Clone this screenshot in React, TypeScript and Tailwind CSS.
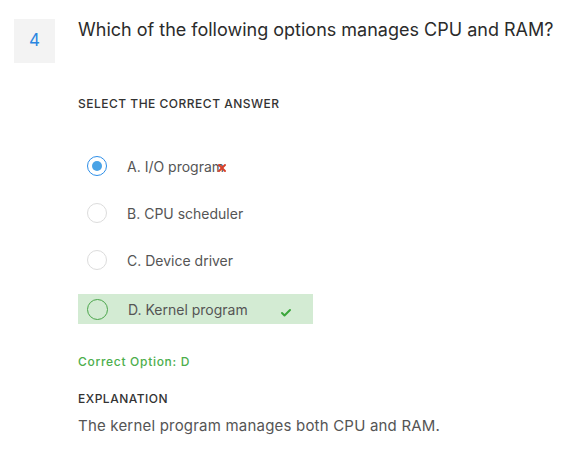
import { Check, X } from "lucide-react";

const options = [
  { key: "A", label: "I/O program", selected: true, wrong: true },
  { key: "B", label: "CPU scheduler" },
  { key: "C", label: "Device driver" },
  { key: "D", label: "Kernel program", correct: true },
];

function Radio({ selected, correct }: { selected?: boolean; correct?: boolean }) {
  if (selected) {
    return (
      <span className="flex h-[20px] w-[20px] items-center justify-center rounded-full border-[1.5px] border-[#2d8ee8]">
        <span className="h-[10px] w-[10px] rounded-full bg-[#4aa3e6]" />
      </span>
    );
  }
  if (correct) {
    return <span className="h-[21px] w-[21px] rounded-full border-[1.5px] border-[#4aa54a]" />;
  }
  return <span className="h-[20px] w-[20px] rounded-full border border-[#dcdcdc]" />;
}

export default function App() {
  return (
    <div className="min-h-[464px] w-[570px] bg-white font-['Inter',sans-serif]">
      <div className="flex pl-[14px] pt-[19px]">
        <div className="flex h-[44px] w-[41px] items-center justify-center bg-[#f3f3f3] text-[17px] text-[#2a86e0]">
          4
        </div>
        <div className="ml-[23px] flex-1">
          <h1 className="mt-[-1px] text-[18px] leading-[24px] text-[#2b2b2b]">
            Which of the following options manages CPU and RAM?
          </h1>
          <p className="mt-[54px] text-[12px] font-medium leading-[16px] tracking-[0.5px] text-[#333]">
            SELECT THE CORRECT ANSWER
          </p>

          <div className="mt-[39px] flex flex-col gap-[17px]">
            {options.map((o) => (
              <div
                key={o.key}
                className={`relative flex h-[30px] w-[235px] items-center pl-[9px] ${
                  o.correct ? "mt-[2px] bg-[#d3ebd3]" : ""
                }`}
              >
                <Radio selected={o.selected} correct={o.correct} />
                <span className="ml-[20px] text-[14px] text-[#555]">
                  {o.key}. {o.label}
                </span>
                {o.wrong && (
                  <X
                    className="absolute left-[138px] top-[11px] h-[12px] w-[12px] text-[#d9412b]"
                    strokeWidth={4}
                  />
                )}
                {o.correct && (
                  <Check
                    className="absolute left-[202px] top-[13px] h-[12px] w-[12px] text-[#3aa63a]"
                    strokeWidth={4}
                  />
                )}
              </div>
            ))}
          </div>

          <p className="mt-[30px] text-[12px] font-medium leading-[16px] tracking-[0.7px] text-[#4cae4c]">
            Correct Option: D
          </p>
          <p className="mt-[21px] text-[12px] font-medium leading-[16px] tracking-[0.5px] text-[#333]">
            EXPLANATION
          </p>
          <p className="mt-[8px] text-[15px] tracking-[0.2px] text-[#555]">
            The kernel program manages both CPU and RAM.
          </p>
        </div>
      </div>
    </div>
  );
}
